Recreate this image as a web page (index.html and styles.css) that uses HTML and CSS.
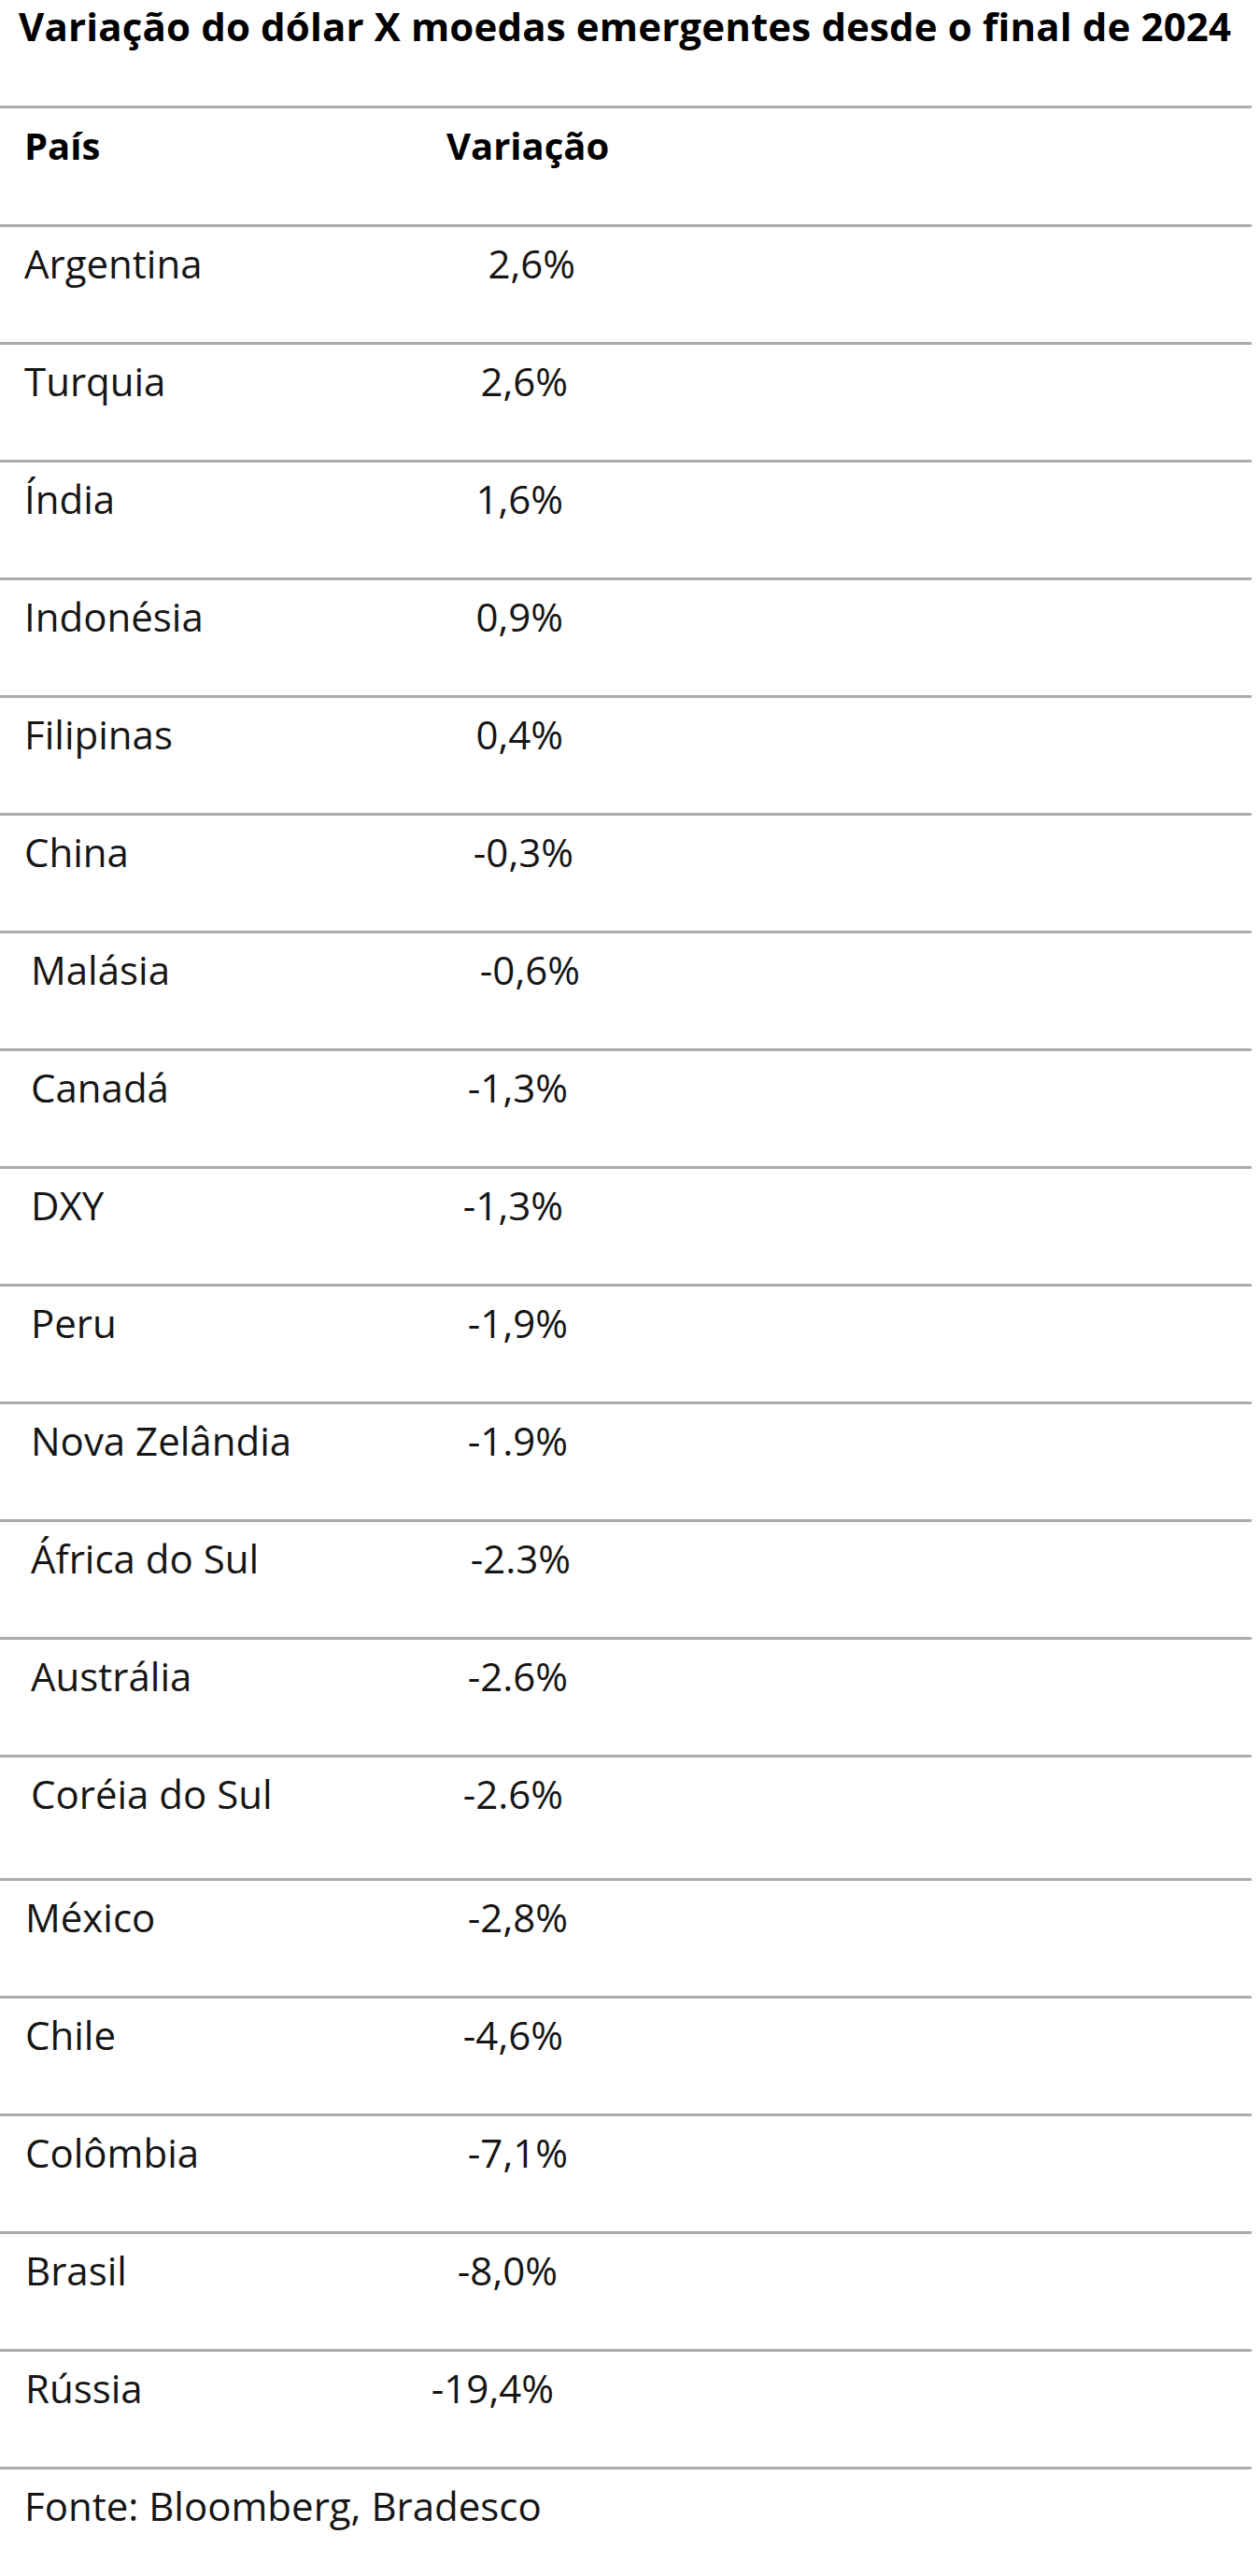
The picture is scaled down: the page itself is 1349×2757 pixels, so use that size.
FILE: index.html
```html
<!DOCTYPE html>
<html lang="pt-BR">
<head>
<meta charset="utf-8">
<title>Variação do dólar X moedas emergentes desde o final de 2024</title>
<link rel="stylesheet" href="styles.css">
</head>
<body>
<main class="page">
  <h1 class="title">Variação do dólar X moedas emergentes desde o final de 2024</h1>
  <div class="table">
    <div class="row head"><span class="country">País</span><span class="value">Variação</span></div>
    <div class="row g1"><span class="country">Argentina</span><span class="value v615">2,6%</span></div>
    <div class="row g1"><span class="country">Turquia</span><span class="value">2,6%</span></div>
    <div class="row g1"><span class="country">Índia</span><span class="value v602">1,6%</span></div>
    <div class="row g1"><span class="country">Indonésia</span><span class="value v602">0,9%</span></div>
    <div class="row g1"><span class="country">Filipinas</span><span class="value v602">0,4%</span></div>
    <div class="row g1"><span class="country">China</span><span class="value v613">-0,3%</span></div>
    <div class="row g2"><span class="country">Malásia</span><span class="value v620">-0,6%</span></div>
    <div class="row g2"><span class="country">Canadá</span><span class="value">-1,3%</span></div>
    <div class="row g2"><span class="country">DXY</span><span class="value v602">-1,3%</span></div>
    <div class="row g2"><span class="country">Peru</span><span class="value">-1,9%</span></div>
    <div class="row g2"><span class="country">Nova Zelândia</span><span class="value">-1.9%</span></div>
    <div class="row g2"><span class="country">África do Sul</span><span class="value v610">-2.3%</span></div>
    <div class="row g2"><span class="country">Austrália</span><span class="value">-2.6%</span></div>
    <div class="row g2 tall"><span class="country">Coréia do Sul</span><span class="value v602">-2.6%</span></div>
    <div class="row g3"><span class="country">México</span><span class="value">-2,8%</span></div>
    <div class="row g3"><span class="country">Chile</span><span class="value v602">-4,6%</span></div>
    <div class="row g3"><span class="country">Colômbia</span><span class="value">-7,1%</span></div>
    <div class="row g3"><span class="country">Brasil</span><span class="value v596">-8,0%</span></div>
    <div class="row g3"><span class="country">Rússia</span><span class="value v592">-19,4%</span></div>
  </div>
  <p class="source">Fonte: Bloomberg, Bradesco</p>
</main>
</body>
</html>
```

FILE: styles.css
```css
html, body {
  margin: 0;
  padding: 0;
  background: #ffffff;
}

body {
  font-family: "Open Sans", "Noto Sans", "Liberation Sans", sans-serif;
  color: #161616;
}

.page {
  width: 1340px;
  height: 2757px;
  overflow: hidden;
}

.title {
  margin: 0;
  box-sizing: border-box;
  height: 113px;
  padding: 7px 0 0 20px;
  font-size: 42px;
  line-height: 1;
  font-weight: 700;
  color: #000000;
  letter-spacing: 0.15px;
  white-space: nowrap;
}

.table {
  display: flex;
  flex-direction: column;
}

.row {
  display: flex;
  align-items: flex-start;
  box-sizing: border-box;
  height: 126px;
  padding-top: 18px;
  border-top: 3px solid #ababab;
  font-size: 42px;
  line-height: 1;
}

.row.tall {
  height: 132px;
}

.country {
  box-sizing: border-box;
  flex: 0 0 440px;
  padding-left: 26px;
  white-space: nowrap;
}

.value {
  box-sizing: border-box;
  flex: 0 0 168px;
  text-align: right;
  white-space: nowrap;
}

.row.g2 .country { padding-left: 33px; }
.row.g3 .country { padding-left: 27px; }

.value.v615 { flex-basis: 176px; }
.value.v613 { flex-basis: 174px; }
.value.v620 { flex-basis: 181px; }
.value.v610 { flex-basis: 171px; }
.value.v602 { flex-basis: 163px; }
.value.v596 { flex-basis: 157px; }
.value.v592 { flex-basis: 153px; }

.row.head {
  height: 127px;
  padding-top: 20px;
  font-size: 40px;
  font-weight: 700;
  color: #000000;
}

.row.head .country { padding-left: 26px; }

.row.head .value {
  flex-basis: 300px;
  text-align: left;
  padding-left: 38px;
}

.source {
  margin: 0;
  box-sizing: border-box;
  height: 115px;
  padding: 18px 0 0 26px;
  border-top: 3px solid #ababab;
  font-size: 42px;
  line-height: 1;
  white-space: nowrap;
}
```
